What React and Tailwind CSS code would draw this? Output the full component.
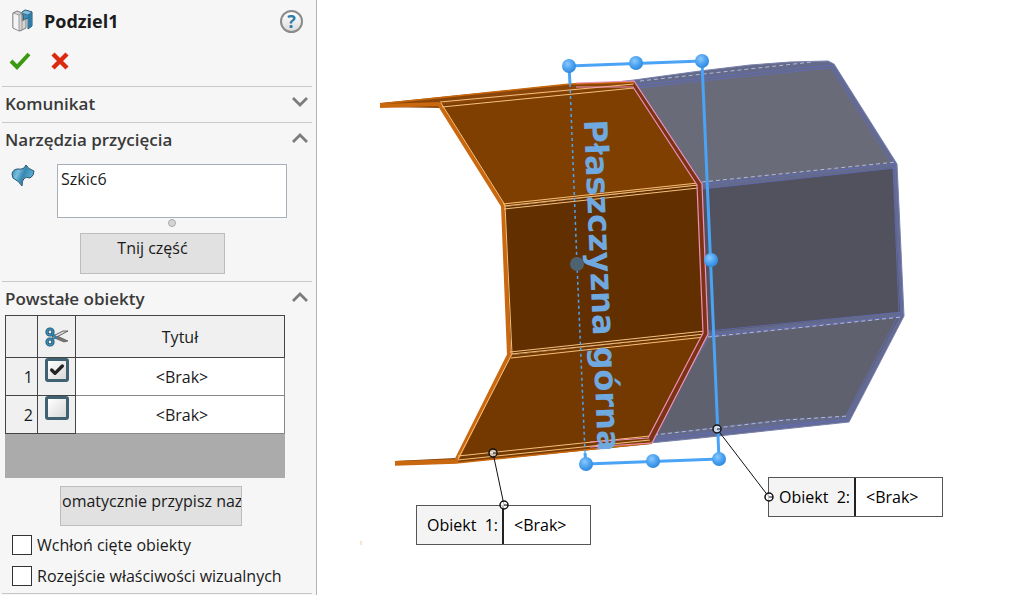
import React from 'react';
import { Check } from 'lucide-react';

const objects = [
    { id: 1, title: '<Brak>', consumed: true },
    { id: 2, title: '<Brak>', consumed: false },
];

const handles = [
    [569, 66], [636, 63], [702, 61], [711, 260], [719, 459], [653, 461], [586, 464],
];

function SplitIcon() {
    return (
        <svg viewBox="0 0 22 24" className="h-6 w-[22px]" aria-hidden="true">
            <path d="M9 4 13 1 20 3 20 17 16 20 16 9 11 11 11 6Z" fill="#3f8db5" stroke="#1f4f6b" strokeWidth="1" strokeLinejoin="round" />
            <path d="M16 6 20 3 20 17 16 20Z" fill="#2f7ba5" />
            <path d="M9 4 13 1 20 3 16 6Z" fill="#86bfdb" stroke="#1f4f6b" strokeWidth="0.6" strokeLinejoin="round" />
            <path d="M1 4 5 2 10 4 10 12 14 10 14 19 8 22 1 19Z" fill="#d6d6d6" stroke="#777" strokeWidth="1" strokeLinejoin="round" />
            <path d="M1 4 7 6 7 22 1 19Z" fill="#f4f4f4" stroke="#8b8b8b" strokeWidth="0.8" strokeLinejoin="round" />
            <path d="M7 6 10 4M10 12V21" fill="none" stroke="#8b8b8b" strokeWidth="0.8" />
        </svg>
    );
}

function SurfaceIcon() {
    return (
        <svg viewBox="0 0 24 23" className="h-[23px] w-6" aria-hidden="true">
            <defs>
                <linearGradient id="surface" x1="0" y1="0" x2="1" y2="0.4">
                    <stop offset="0" stopColor="#2f7ba1" />
                    <stop offset="0.35" stopColor="#79bfe0" />
                    <stop offset="0.6" stopColor="#3787b0" />
                    <stop offset="1" stopColor="#5fb0d6" />
                </linearGradient>
            </defs>
            <path d="M1 10Q2 5 7 5Q13 6 15 1Q17 5 23 7Q23 12 19 14Q11 11 11 22Q8 17 2 14Z" fill="url(#surface)" stroke="#24566f" strokeWidth="1" strokeLinejoin="round" />
        </svg>
    );
}

function ScissorsIcon() {
    return (
        <svg viewBox="0 0 24 20" className="mx-auto h-5 w-6" aria-hidden="true">
            <path d="M8 7 23 14 19 15 7 10Z" fill="#777" stroke="#444" strokeWidth="0.6" />
            <path d="M8 12 23 4 18 4 8 9Z" fill="#ddd" stroke="#444" strokeWidth="0.8" />
            <circle cx="5" cy="5" r="3" fill="none" stroke="#1d4f6c" strokeWidth="3.2" />
            <circle cx="5" cy="5" r="3" fill="none" stroke="#3d8fba" strokeWidth="1.4" />
            <circle cx="5" cy="15" r="3" fill="none" stroke="#1d4f6c" strokeWidth="3.2" />
            <circle cx="5" cy="15" r="3" fill="none" stroke="#3d8fba" strokeWidth="1.4" />
            <path d="M7 7 11 10 7 13" fill="none" stroke="#2f7fa8" strokeWidth="2" />
        </svg>
    );
}

function Section({ title, open, children }) {
    return (
        <section className="border-t border-[#c9c9c9]">
            <button type="button" aria-expanded={open} className="flex h-[33px] w-full items-center justify-between pl-[3px] pr-1 text-[17px] font-semibold text-[#3a3a3a]">
                {title}
                <svg viewBox="0 0 16 10" className="mb-[3px] h-2.5 w-4" fill="none" stroke="#7c7c7c" strokeWidth="2.8" aria-hidden="true">
                    <path d={open ? 'M1 9 8 2 15 9' : 'M1 1 8 8 15 1'} />
                </svg>
            </button>
            {children}
        </section>
    );
}

function PropertyPanel() {
    return (
        <aside className="w-[317px] shrink-0 border-r border-[#b4b4b4] bg-[#f6f6f6] pl-0.5 pr-1">
            <header className="h-[86px]">
                <div className="flex h-[42px] items-center pl-2.5 pr-[9px]">
                    <SplitIcon />
                    <h1 className="ml-2.5 flex-1 text-lg font-bold text-[#1c1c1c]">Podziel1</h1>
                    <button type="button" aria-label="Pomoc" className="flex size-[23px] items-center justify-center rounded-full border-2 border-[#8a8a8a] bg-linear-to-b from-white to-[#dcdcdc] text-lg font-bold leading-none text-[#2e7ca8]">?</button>
                </div>
                <div className="flex h-[38px] items-center gap-5 pl-[7px]">
                    <button type="button" aria-label="OK">
                        <svg viewBox="0 0 22 18" className="h-[18px] w-[22px]" aria-hidden="true">
                            <path d="M2 9 8 15 20 2" fill="none" stroke="#3c9a12" strokeWidth="4" />
                        </svg>
                    </button>
                    <button type="button" aria-label="Anuluj">
                        <svg viewBox="0 0 18 18" className="size-[18px]" aria-hidden="true">
                            <path d="M2 2 16 16M16 2 2 16" fill="none" stroke="#dc2a10" strokeWidth="4.4" />
                        </svg>
                    </button>
                </div>
            </header>

            <Section title="Komunikat" open={false}>
                <div className="h-0.5" />
            </Section>

            <Section title="Narzędzia przycięcia" open>
                <div className="flex gap-[22px] pb-px pl-[9px] pr-[25px] pt-2">
                    <SurfaceIcon />
                    <textarea aria-label="Narzędzia przycięcia" defaultValue="Szkic6" className="h-[54px] min-w-0 flex-1 resize-none border border-[#a9afb8] bg-white px-[3px] py-0.5 leading-6 outline-none" />
                </div>
                <div className="ml-[166px] size-2 rounded-full border border-[#aaa] bg-[#d4d4d4]" />
                <button type="button" className="mb-[7px] ml-[78px] mt-1.5 flex h-[41px] w-[145px] justify-center border border-[#bdbdbd] bg-[#e1e1e1] pt-0.5">Tnij część</button>
            </Section>

            <Section title="Powstałe obiekty" open>
                <div className="ml-[3px] mr-[27px] bg-[#ababab] pb-11">
                    <table className="w-full table-fixed border-collapse">
                        <thead>
                            <tr className="h-[42px] bg-[#f0f0f0]">
                                <th className="w-8 border border-[#444]"></th>
                                <th className="w-[38px] border border-[#444] p-0"><ScissorsIcon /></th>
                                <th className="border border-[#444] font-normal">Tytuł</th>
                            </tr>
                        </thead>
                        <tbody>
                            {objects.map((item) => (
                                <tr key={item.id} className="h-[38px]">
                                    <td className="border border-[#444] bg-[#f0f0f0] p-0 pr-1 text-right">{item.id}</td>
                                    <td className="border border-[#444] bg-[#f0f0f0] p-0 align-top">
                                        <span className="relative mx-auto block size-6">
                                            <input type="checkbox" aria-label={'Obiekt ' + item.id} defaultChecked={item.consumed} className="peer block size-6 appearance-none rounded-[3px] border-3 border-[#3f6172] bg-linear-to-br from-white to-[#d9d9d9]" />
                                            <Check className="pointer-events-none absolute left-1 top-1 hidden size-4 text-[#222] peer-checked:block" strokeWidth={5} />
                                        </span>
                                    </td>
                                    <td className="border border-[#888] bg-white p-0 pl-1 text-center">{item.title}</td>
                                </tr>
                            ))}
                        </tbody>
                    </table>
                </div>
                <button type="button" className="mb-[3px] ml-[58px] mt-2 flex h-10 w-[182px] overflow-hidden whitespace-nowrap border border-[#bdbdbd] bg-[#e1e1e1] pl-px pt-0.5">omatycznie przypisz naz</button>
                <label className="flex h-[31px] items-center gap-[5px] pl-2.5">
                    <input type="checkbox" className="size-5 appearance-none border border-[#333] bg-white" />
                    Wchłoń cięte obiekty
                </label>
                <label className="flex h-[31px] items-center gap-[5px] pl-2.5">
                    <input type="checkbox" className="size-5 appearance-none border border-[#333] bg-white" />
                    <span className="whitespace-nowrap">Rozejście właściwości wizualnych</span>
                </label>
            </Section>
            <div className="mt-0.5 border-t border-[#c9c9c9]" />
        </aside>
    );
}

function Model() {
    return (
        <svg className="absolute inset-0 size-full" role="img" aria-label="Model części">
            <defs>
                <radialGradient id="handle" cx="0.4" cy="0.35" r="0.7">
                    <stop offset="0" stopColor="#8cc8fb" />
                    <stop offset="0.5" stopColor="#4fa5f3" />
                    <stop offset="1" stopColor="#2b84d8" />
                </radialGradient>
            </defs>
            <g transform="translate(-317 0)" strokeLinejoin="round">
                {/* second body */}
                <path d="M600 84 634 80 700 71 750 65 790 62 828 61 834 64 897 164 904 316 849 422 700 438 650 443 708 334 701 184Z" fill="#646a8a" stroke="#7880ad" />
                <path d="M638 88 740 77 831 68 893 163 702 182Z" fill="#696b79" />
                <path d="M702 189 893 168 900 312 708 332Z" fill="#51525e" />
                <path d="M709 338 899 318 846 416 780 419 654 434Z" fill="#5f616e" />
                <g fill="none" stroke="#626cb8" strokeWidth="0.8">
                    <path d="M636 85 740 74 832 65 895 164 902 314 847 420 650 441" />
                    <path d="M638 88 740 77 831 68 893 166 899 314 845 417" />
                    <path d="M702 185 896 164M702 189 896 168M708 331 902 312M708 335 902 316M654 438 848 419" />
                </g>
                <g fill="none" stroke="#b4bade" strokeDasharray="4 3">
                    <path d="M640 81 740 70 812 62M702 182 896 162M708 337 902 317M654 435 786 420 848 416" />
                </g>

                {/* first body */}
                <path d="M380 103 570 84 634 81 636 88 441 108 380 107Z" fill="#8a4508" />
                <path d="M395 461 456 458 650 437 652 444 456 463 395 465Z" fill="#7d3e05" />
                <path d="M439 105 634 85 699 185 503 207Z" fill="#7f3f00" />
                <path d="M503 207 699 185 706 334 511 355Z" fill="#623000" />
                <path d="M511 355 706 334 651 440 457 461Z" fill="#733900" />
                <g fill="none" stroke="#c9680f">
                    <path d="M380 106 439 104 503 206 509 355 456 461 395 463" strokeWidth="4" />
                    <path d="M380 104 570 84 634 82M395 465 456 463 652 443" strokeWidth="1.5" />
                </g>
                <g fill="none" stroke="#f6c07d">
                    <path d="M441 103 505 205 512 354 458 459" />
                    <path d="M440 102 634 84M442 107 634 88" />
                    <path d="M503 204 698 183M504 206 698 185M504 209 698 188" />
                    <path d="M510 352 705 331M511 354 705 334M511 358 705 337" />
                    <path d="M458 456 650 436M458 460 650 440" />
                </g>

                {/* cut edge */}
                <path d="M634 82 702 184 708 334 652 442 648 438 703 333 697 185 633 87Z" fill="#7b3413" />
                <g fill="none" stroke="#f28fbe" strokeWidth="1.2">
                    <path d="M576 83 634 81 702 184 708 334 652 443 590 447" />
                    <path d="M576 87 633 87 697 185 703 333 648 438 590 442" />
                </g>

                {/* reference plane */}
                <g fill="none" stroke="#4ba3f5">
                    <path d="M570 84 569 66 702 61 719 459 586 464 585 453" strokeWidth="3" />
                    <path d="M570 84 577 264 585 453" strokeWidth="1.5" strokeDasharray="3 3" />
                </g>
                <text transform="translate(584 120) rotate(87.6)" fontSize="32" fontWeight="700" fill="#6fa9e0" className="font-['DejaVu_Sans',sans-serif]">Płaszczyzna górna</text>
                {handles.map(([x, y]) => (
                    <circle key={x} cx={x} cy={y} r="7" fill="url(#handle)" />
                ))}
                <circle cx="577" cy="264" r="7" fill="#4d6371" />
                <path d="M361 541V545" stroke="#e9c9a0" />
            </g>
        </svg>
    );
}

function Callout({ id, className }) {
    return (
        <div className={'absolute flex h-10 w-[175px] border border-[#555] bg-white text-black ' + className}>
            <label htmlFor={'callout-' + id} className="flex w-[87px] items-center justify-end whitespace-pre border-r-2 border-[#222] bg-[#f4f4f4] pr-1">{'Obiekt  ' + id + ':'}</label>
            <input id={'callout-' + id} defaultValue="<Brak>" className="min-w-0 flex-1 bg-white pl-2.5 outline-none" />
        </div>
    );
}

function Leaders() {
    return (
        <svg className="pointer-events-none absolute inset-0 size-full" aria-hidden="true">
            <g transform="translate(-317 0)" stroke="#111">
                <path d="M493 453 504 505M717 429 769 497" />
                <g fill="#fff" fillOpacity="0.7" strokeWidth="1.5">
                    <circle cx="493" cy="453" r="4" />
                    <circle cx="504" cy="505" r="4" />
                    <circle cx="717" cy="429" r="4" />
                    <circle cx="769" cy="497" r="4" />
                </g>
                <path d="M493 453H496M504 505H508M717 429H720M769 497H773" />
            </g>
        </svg>
    );
}

export default function App() {
    return (
        <div className="flex min-h-screen bg-white font-['Open_Sans','Noto_Sans',sans-serif] text-base text-[#1a1a1a]">
            <PropertyPanel />
            <main className="relative min-w-0 flex-1 overflow-hidden">
                <Model />
                <Callout id={1} className="left-[99px] top-[505px]" />
                <Callout id={2} className="left-[451px] top-[477px]" />
                <Leaders />
            </main>
        </div>
    );
}
